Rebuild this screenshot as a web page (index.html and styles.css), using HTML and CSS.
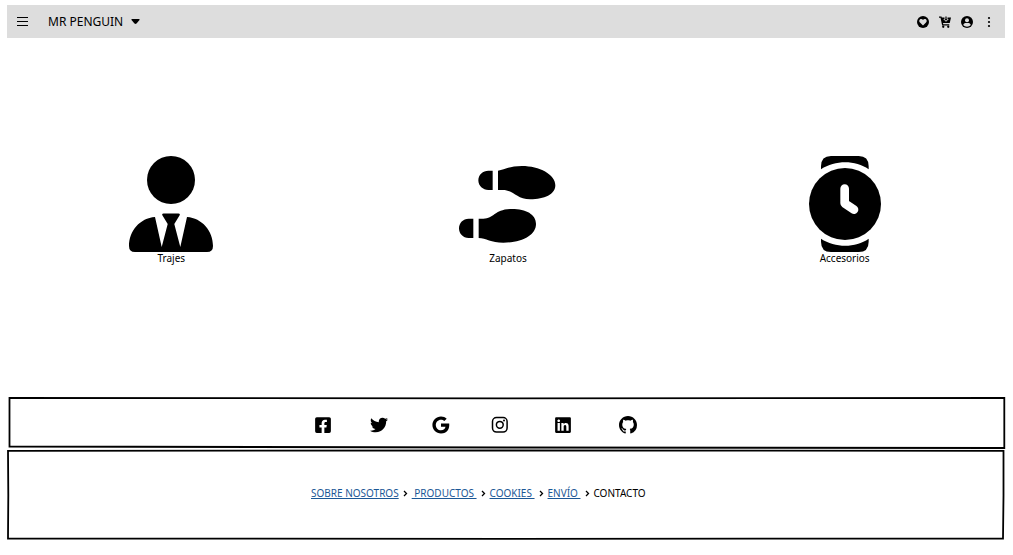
FILE: index.html
```html
<!DOCTYPE html>
<html lang="es">
<head>
<meta charset="utf-8">
<meta name="viewport" content="width=device-width, initial-scale=1">
<title>Mr Penguin</title>
<link rel="stylesheet" href="styles.css">
</head>
<body>
<header class="topbar">
  <button class="icon-button" type="button" aria-label="Menú">
    <svg class="icon" viewBox="0 0 12 12"><path d="M1 1.500h11M1 5.500h11M1 9.500h11" fill="none" stroke="#000" stroke-width="1.200"/></svg>
  </button>
  <button class="brand" type="button">MR PENGUIN
    <svg class="caret" viewBox="0 0 9 5"><path d="M1 0H8Q9 0 8.500 1L5.500 4.500Q4.500 5.300 3.500 4.500L.5 1Q0 0 1 0z"/></svg>
  </button>
  <div class="actions">
    <button class="icon-button" type="button" aria-label="Favoritos">
      <svg class="icon" viewBox="0 0 24 24"><circle cx="12" cy="12" r="12"/><path d="M12 19l-6-6C3 10 5 6 8.500 6 10 6 11.200 6.800 12 8c.8-1.200 2-2 3.500-2C19 6 21 10 18 13z" fill="#ddd"/></svg>
    </button>
    <button class="icon-button" type="button" aria-label="Carrito">
      <svg class="icon" viewBox="0 0 24 24"><path d="M0 1h5l.6 2H11v3H8.500L14 11.500 19.500 6H17V3h7l-2.500 11H8l.5 2.500h12V19H6.300L3 3.500H0z"/><path d="M12.800 1h2.400v5h2L14 9.300 10.800 6h2z"/><circle cx="8.500" cy="21.500" r="2.300"/><circle cx="18.500" cy="21.500" r="2.300"/></svg>
    </button>
    <button class="icon-button" type="button" aria-label="Cuenta">
      <svg class="icon" viewBox="0 0 24 24"><circle cx="12" cy="12" r="12"/><circle cx="12" cy="8.500" r="4" fill="#ddd"/><path d="M4.500 18c1-3 3-4 5-4h5c2 0 4 1 5 4-4 4.500-11 4.500-15 0z" fill="#ddd"/></svg>
    </button>
    <button class="icon-button" type="button" aria-label="Más opciones">
      <svg class="icon" viewBox="0 0 12 12"><circle cx="6" cy="2" r="1.100"/><circle cx="6" cy="6" r="1.100"/><circle cx="6" cy="10" r="1.100"/></svg>
    </button>
  </div>
</header>

<main class="categories">
  <a class="category" href="#trajes">
    <svg class="picture" viewBox="0 0 84 96"><circle cx="42" cy="24" r="24"/><path d="M26 61l6.700 30L38.700 68 33.500 59.500q-1-2 1-2h15q2 0 1 2L45.300 68l6 23L58 61c15 1 26 14 26 29q0 6-6 6H6q-6 0-6-6c0-15 11-28 26-29z"/></svg>
    Trajes
  </a>
  <a class="category" href="#zapatos">
    <svg class="picture" viewBox="24 3 291 288"><path d="M125 47h-13c-16 0-30 12-30 29s14 29 30 29h13zM141 47c19-3 34-14 72-14 52 0 100 25 100 58 0 27-33 42-75 42-43 0-48-28-83-28h-14zM67 191H53c-17 0-29 13-29 29s12 29 29 29h14zM83 191h14c33 0 33-29 86-29 42 0 72 16 72 45 0 33-40 56-98 56-37 0-52-13-74-14z"/></svg>
    Zapatos
  </a>
  <a class="category" href="#accesorios">
    <svg class="picture" viewBox="41 19 216 288"><circle cx="149" cy="163" r="108"/><path d="M77 59v-9q0-31 30-31h83q30 0 30 31v9C180 31 120 31 77 59zM77 267c43 28 103 28 143 0v9q0 31-30 31h-83q-30 0-30-31z"/><path d="M148 117v44l28 19" fill="none" stroke="#fff" stroke-width="26" stroke-linecap="round" stroke-linejoin="round"/></svg>
    Accesorios
  </a>
</main>

<footer class="footer">
  <section class="panel social" aria-label="Redes sociales">
    <svg class="frame" viewBox="0 0 998 53" preserveAspectRatio="none"><path d="M2.500 1L500 1.300l497.300-.3V51L500 50.500 2.500 49.500z"/></svg>
    <a href="#facebook" aria-label="Facebook"><svg class="social-icon" viewBox="-28 0 504 512"><path d="M400 32H48A48 48 0 0 0 0 80v352a48 48 0 0 0 48 48h137.250V327.690h-63V256h63v-54.640c0-62.150 37-96.480 93.670-96.480 27.140 0 55.520 4.840 55.520 4.840v61h-31.270c-30.810 0-40.420 19.120-40.420 38.730V256h68.780l-11 71.690h-57.780V480H400a48 48 0 0 0 48-48V80a48 48 0 0 0-48-48z"/></svg></a>
    <a href="#twitter" aria-label="Twitter"><svg class="social-icon" viewBox="0 0 512 512"><path d="M459.370 151.716c.325 4.548.325 9.097.325 13.645 0 138.720-105.583 298.558-298.558 298.558-59.452 0-114.680-17.219-161.137-47.106 8.447.974 16.568 1.299 25.340 1.299 49.055 0 94.213-16.568 130.274-44.832-46.132-.975-84.792-31.188-98.112-72.772 6.498.974 12.995 1.624 19.818 1.624 9.421 0 18.843-1.300 27.614-3.573-48.081-9.747-84.143-51.980-84.143-102.985v-1.299c13.969 7.797 30.214 12.670 47.431 13.319-28.264-18.843-46.781-51.005-46.781-87.391 0-19.492 5.197-37.360 14.294-52.954 51.655 63.675 129.300 105.258 216.365 109.807-1.624-7.797-2.599-15.918-2.599-24.040 0-57.828 46.782-104.934 104.934-104.934 30.213 0 57.502 12.670 76.670 33.137 23.715-4.548 46.456-13.320 66.599-25.340-7.798 24.366-24.366 44.833-46.132 57.827 21.117-2.273 41.584-8.122 60.426-16.243-14.292 20.791-32.161 39.308-52.628 54.253z"/></svg></a>
    <a href="#google" aria-label="Google"><svg class="social-icon" viewBox="0 0 18 18"><path d="M9 7.400h8.200c.6 5-2 10.100-8.200 10.100C4.200 17.500.4 13.700.4 9S4.200.5 9 .5c2.300 0 4.200.8 5.700 2.200l-2.400 2.300C11.400 4.200 10.300 3.700 9 3.700 6.100 3.700 3.800 6.100 3.800 9s2.300 5.300 5.200 5.300c2.600 0 4.100-1.500 4.500-3.600H9z"/></svg></a>
    <a href="#instagram" aria-label="Instagram"><svg class="social-icon" viewBox="0 0 18 18"><g fill="none" stroke="#000" stroke-width="1.500"><rect x="1.500" y="1.500" width="14.600" height="14.600" rx="4"/><circle cx="8.800" cy="8.800" r="3.400"/></g><circle cx="13" cy="4.600" r="1"/></svg></a>
    <a href="#linkedin" aria-label="LinkedIn"><svg class="social-icon" viewBox="-28 0 504 512"><path d="M416 32H31.900C14.300 32 0 46.500 0 64.300v383.400C0 465.500 14.300 480 31.900 480H416c17.600 0 32-14.500 32-32.300V64.300c0-17.800-14.400-32.300-32-32.300zM135.400 416H69V202.200h66.500V416zm-33.200-243c-21.300 0-38.500-17.300-38.500-38.500S80.900 96 102.200 96c21.200 0 38.500 17.300 38.500 38.500 0 21.300-17.200 38.500-38.500 38.500zm282.100 243h-66.400V312c0-24.800-.5-56.700-34.500-56.700-34.600 0-39.900 27-39.900 54.900V416h-66.400V202.200h63.700v29.200h.9c8.900-16.800 30.600-34.500 62.900-34.500 67.200 0 79.700 44.300 79.700 101.900V416z"/></svg></a>
    <a href="#github" aria-label="GitHub"><svg class="social-icon" viewBox="0 0 16 16"><path d="M8 0C3.580 0 0 3.580 0 8c0 3.540 2.290 6.530 5.470 7.590.4.070.55-.17.55-.38 0-.19-.01-.82-.01-1.490-2.010.37-2.530-.49-2.690-.94-.09-.23-.48-.94-.82-1.130-.28-.15-.68-.52-.01-.53.63-.01 1.080.58 1.230.82.72 1.210 1.870.87 2.330.66.07-.52.28-.87.51-1.070-1.780-.2-3.640-.89-3.640-3.950 0-.87.31-1.590.82-2.150-.08-.2-.36-1.020.08-2.120 0 0 .67-.21 2.200.82.64-.18 1.320-.27 2-.27s1.360.09 2 .27c1.530-1.040 2.200-.82 2.200-.82.44 1.100.16 1.920.08 2.120.51.56.82 1.270.82 2.150 0 3.070-1.870 3.750-3.650 3.950.29.25.54.73.54 1.480 0 1.070-.01 1.930-.01 2.200 0 .21.15.46.55.38A8.010 8.010 0 0 0 16 8c0-4.420-3.580-8-8-8z"/></svg></a>
  </section>
  <section class="panel links">
    <svg class="frame" viewBox="0 0 998 90" preserveAspectRatio="none"><path d="M1 .8L500 .5l496.500.3v45l-.5 42.700L500 88.800 1 88.500 1.300 45z"/></svg>
    <nav class="breadcrumb" aria-label="Enlaces">
      <a href="#nosotros">SOBRE NOSOTROS</a>
      <svg class="chevron" viewBox="0 0 5 7"><path d="M1 1l2.500 2.500L1 6"/></svg>
      <a href="#productos">&nbsp;PRODUCTOS&nbsp;</a>
      <svg class="chevron" viewBox="0 0 5 7"><path d="M1 1l2.500 2.500L1 6"/></svg>
      <a href="#cookies">COOKIES&nbsp;</a>
      <svg class="chevron" viewBox="0 0 5 7"><path d="M1 1l2.500 2.500L1 6"/></svg>
      <a href="#envio">ENVÍO&nbsp;</a>
      <svg class="chevron" viewBox="0 0 5 7"><path d="M1 1l2.500 2.500L1 6"/></svg>
      <span>CONTACTO</span>
    </nav>
  </section>
</footer>
</body>
</html>
```
FILE: styles.css
```css
* {
  box-sizing: border-box;
}

body {
  margin: 0;
  padding-top: 5px;
  background: #fff;
  color: #000;
  font: 10px/12px "Noto Sans", sans-serif;
}

svg {
  display: block;
}

button {
  padding: 0;
  border: 0;
  background: none;
  color: inherit;
  font: inherit;
  cursor: pointer;
}

.topbar {
  display: flex;
  align-items: center;
  gap: 20px;
  margin: 0 8px 0 7px;
  padding: 8px 10px 8px 9px;
  background: #ddd;
}

.icon {
  width: 12px;
  height: 12px;
}

.brand {
  display: flex;
  align-items: center;
  gap: 8px;
  font-size: 12px;
  line-height: 17px;
}

.caret {
  width: 9px;
  height: 5px;
}

.actions {
  display: flex;
  gap: 10px;
  margin-left: auto;
}

.categories {
  display: grid;
  grid-template-columns: repeat(3, 1fr);
  min-height: 359px;
  padding: 118px 0 118px 3px;
}

.category {
  display: flex;
  flex-direction: column;
  align-items: center;
  color: inherit;
  text-decoration: none;
}

.picture {
  height: 96px;
}

.footer {
  margin: 0 8px 0 7px;
}

.panel {
  position: relative;
  display: flex;
  align-items: center;
}

.frame {
  position: absolute;
  inset: 0;
  width: 100%;
  height: 100%;
  overflow: visible;
  fill: none;
  stroke: #000;
  stroke-width: 1.8;
  pointer-events: none;
}

.social {
  display: grid;
  grid-template-columns: 56px 62px 59px 63px 65px 18px;
  padding: 19px 0 16px 307px;
}

.social a {
  color: inherit;
}

.social-icon {
  width: 18px;
  height: 18px;
}

.links {
  padding: 37px 0 41px 304px;
}

.breadcrumb {
  display: flex;
  align-items: center;
  gap: 4px;
}

.breadcrumb a {
  color: #1a5796;
}

.chevron {
  width: 5px;
  height: 7px;
  fill: none;
  stroke: #000;
  stroke-width: 1.3;
}
```
